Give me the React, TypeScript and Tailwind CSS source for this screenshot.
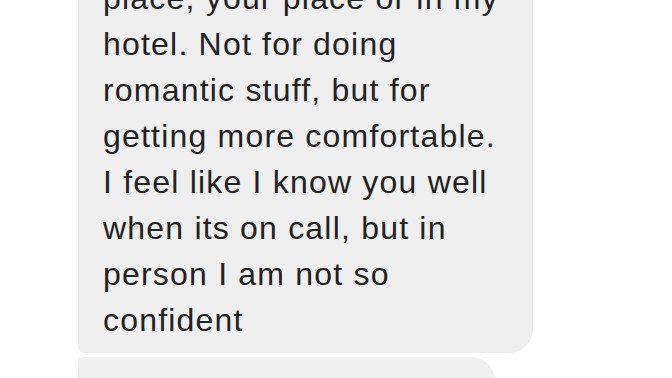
const lines = [
  "place, your place or in my",
  "hotel. Not for doing",
  "romantic stuff, but for",
  "getting more comfortable.",
  "I feel like I know you well",
  "when its on call, but in",
  "person I am not so",
  "confident",
];

export default function App() {
  return (
    <div className="w-[672px] h-[378px] overflow-hidden bg-white font-['Liberation_Sans',Arial,sans-serif]">
      <div className="flex flex-col gap-[4px] pl-[78px] -mt-[35px]">
        <div className="w-[455px] bg-[#efefef] rounded-tr-[24px] rounded-br-[24px] rounded-tl-[6px] rounded-bl-[6px] pl-[25px] pt-[10px] pb-[10px] text-[32px] leading-[46px] tracking-[1.2px] text-[#222222]">
          {lines.map((l) => (
            <div key={l} className="whitespace-nowrap">
              {l}
            </div>
          ))}
        </div>
        <div className="w-[417px] h-[60px] bg-[#efefef] rounded-tl-[6px] rounded-tr-[24px]" />
      </div>
    </div>
  );
}
